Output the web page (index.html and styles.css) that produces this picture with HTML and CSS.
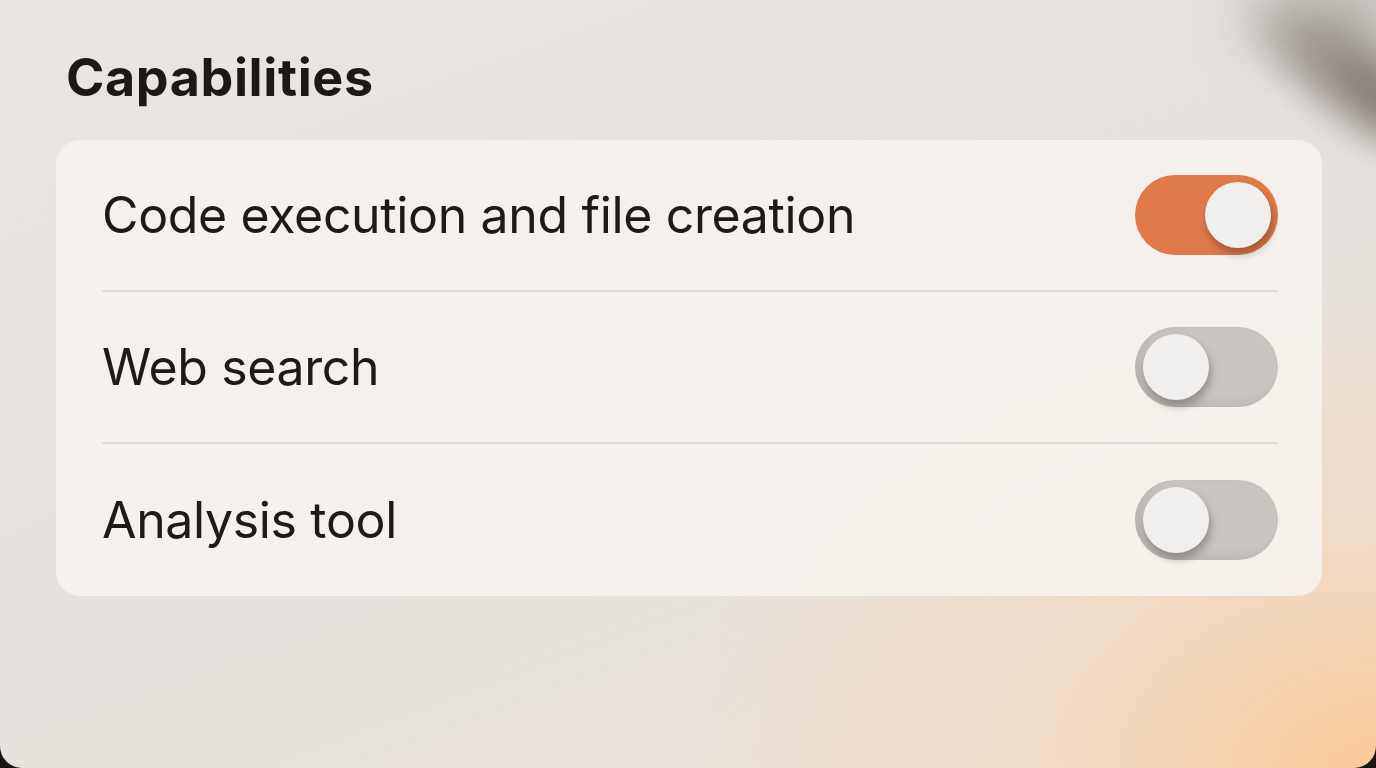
FILE: index.html
```html
<!DOCTYPE html>
<html>
<head>
<meta charset="utf-8">
<link rel="stylesheet" href="styles.css">
</head>
<body>
<div class="screen">
  <div class="shade2"></div>
  <div class="shade"></div>
  <div class="content">
    <h1 class="title">Capabilities</h1>
    <div class="card">
      <div class="row">
        <span class="label">Code execution and file creation</span>
        <span class="toggle on"><span class="knob"></span></span>
      </div>
      <div class="row">
        <span class="label">Web search</span>
        <span class="toggle"><span class="knob"></span></span>
      </div>
      <div class="row">
        <span class="label">Analysis tool</span>
        <span class="toggle"><span class="knob"></span></span>
      </div>
    </div>
  </div>
</div>
</body>
</html>
```
FILE: styles.css
```css
html, body {
  margin: 0;
  padding: 0;
  background: #1a1412;
}
.screen {
  position: relative;
  width: 1376px;
  height: 768px;
  overflow: hidden;
  border-radius: 0 0 22px 22px;
  background:
    radial-gradient(ellipse 700px 480px at 1376px 768px, rgba(250,200,150,0.95), rgba(245,215,185,0.55) 50%, rgba(240,225,210,0) 100%),
    linear-gradient(160deg, #e9e6e2 0%, #e6e1dd 50%, #ebe3da 100%);
  font-family: Inter, "Noto Sans", sans-serif;
}
.shade {
  position: absolute;
  left: 1230px;
  top: 20px;
  width: 240px;
  height: 110px;
  border-radius: 50%;
  transform: rotate(35deg);
  background: radial-gradient(ellipse at 65% 50%, rgba(100,92,86,0.85) 0%, rgba(130,122,116,0.5) 45%, rgba(180,172,166,0) 75%);
  filter: blur(14px);
}
.shade2 {
  position: absolute;
  left: 1200px;
  top: -70px;
  width: 280px;
  height: 170px;
  border-radius: 50%;
  background: radial-gradient(ellipse, rgba(150,144,138,0.55) 0%, rgba(170,164,158,0) 70%);
  filter: blur(16px);
}
.content {
  position: relative;
  padding: 40px 54px 0 56px;
}
.title {
  margin: 0 0 24px 10px;
  font-size: 52px;
  font-weight: 700;
  line-height: 76px;
  color: #1c1814;
  letter-spacing: 0.6px;
}
.card {
  width: 1266px;
  border-radius: 24px;
  background: rgba(246,243,239,0.85);
  box-shadow: 0 0 1px rgba(0,0,0,0.04);
}
.row {
  height: 152px;
  margin: 0 44px 0 46px;
  display: flex;
  align-items: center;
  justify-content: space-between;
  box-sizing: border-box;
  border-bottom: 2px solid #dedad6;
}
.row:last-child {
  border-bottom: none;
}
.label {
  font-size: 50px;
  font-weight: 400;
  color: #1e1a16;
  letter-spacing: -0.35px;
}
.toggle {
  position: relative;
  width: 143px;
  height: 80px;
  border-radius: 40px;
  background: #c9c4bf;
  box-shadow: inset 6px -4px 10px rgba(0,0,0,0.08);
  flex-shrink: 0;
}
.toggle.on {
  background: #e07a4b;
  box-shadow: none;
}
.knob {
  position: absolute;
  top: 7px;
  left: 8px;
  width: 66px;
  height: 66px;
  border-radius: 50%;
  background: #f1efed;
  box-shadow: 2px 6px 8px rgba(0,0,0,0.28);
}
.toggle.on .knob {
  left: 70px;
}
```
